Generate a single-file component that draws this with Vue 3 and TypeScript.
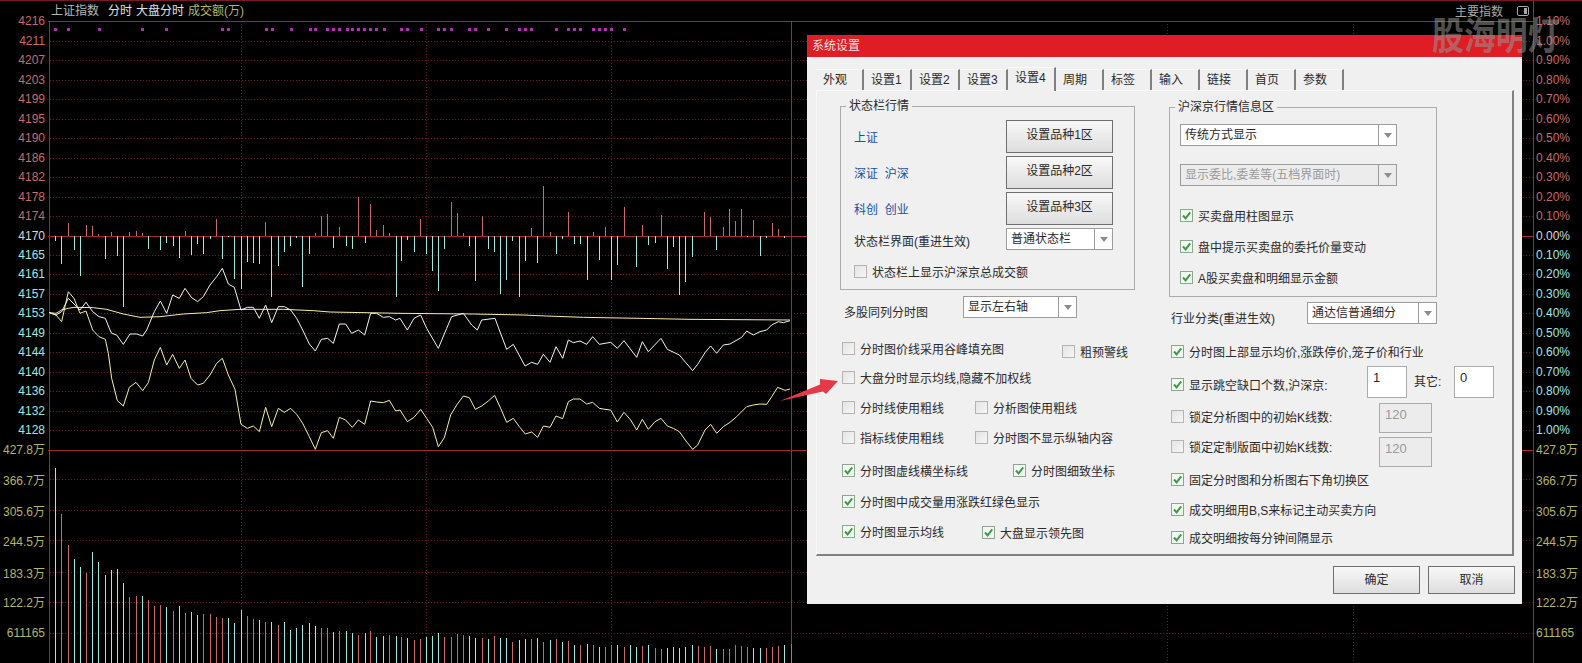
<script setup lang="ts">
type Pair = number[]

const RED = '#c96a6a'
const CYAN = '#9fe8e2'
const OLIVE = '#b4b46c'
const TICK = 'M2 5.5 4.6 8.4 9.2 2.4'

// everything traced from a 3x crop, hence the /3
const trace = (dx: number, dy: number, p: Pair): string[] => {
  const out: string[] = []
  for (let i = 0; i < p.length; i += 2) out.push(`${(p[i] + dx) / 3},${(p[i + 1] + dy) / 3}`)
  return out
}

const priceLine = [
  ...trace(0, 0, [148, 938, 168, 945, 185, 965, 205, 875, 222, 895, 240, 940, 258, 933, 278, 990]),
  ...trace(0, 990, [297, 20, 316, 28, 325, 70, 335, 145, 352, 212, 370, 228, 388, 172, 408, 157, 428, 182, 445, 158, 463, 90, 481, 52, 500, 105, 518, 73, 538, 115, 555, 90, 573, 145, 593, 165, 610, 160, 630, 135, 650, 100, 667, 85, 685, 135, 705, 178, 723, 283, 742, 295, 760, 288, 778, 305, 797, 232, 815, 290, 835, 235, 853, 247, 872, 235, 890, 253, 908, 280, 928, 320, 946, 358, 964, 308, 983, 302, 1000, 325, 1018, 262, 1037, 270, 1057, 292, 1075, 270, 1094, 283, 1112, 213, 1130, 216, 1150, 218, 1168, 211, 1187, 243]),
  ...trace(1200, 990, [0, 240, 22, 275, 42, 262, 62, 238, 80, 265, 98, 292, 115, 350, 133, 323, 152, 255, 170, 225, 190, 198, 208, 203, 226, 238, 245, 228, 265, 213, 284, 196, 302, 235, 320, 277, 340, 265, 358, 290, 376, 312, 395, 306, 413, 322, 430, 288, 450, 292, 468, 258, 488, 266, 505, 215, 520, 207, 540, 207, 560, 222, 578, 217, 598, 235, 615, 238, 632, 240, 652, 276, 672, 247, 692, 270, 710, 300, 727, 268, 745, 298, 765, 275, 783, 265, 802, 288, 820, 295, 838, 305, 858, 333, 878, 358, 893, 345, 915, 300, 932, 283, 950, 310, 970, 290, 990, 277, 1010, 260, 1040, 230, 1060, 225, 1080, 222, 1100, 223, 1115, 200, 1133, 172, 1155, 181, 1170, 177])
].join(' ')

const indexLine = [
  ...trace(0, 0, [148, 938, 168, 945, 185, 935, 205, 895, 222, 912, 240, 930, 258, 907, 278, 935, 297, 950, 316, 955, 330, 990]),
  ...trace(0, 990, [335, 10, 350, 15, 370, 43, 390, 12, 410, 12, 428, 18, 440, 0]),
  ...trace(0, 0, [463, 935, 481, 903, 500, 940, 518, 885, 538, 895, 555, 865, 575, 893, 593, 905, 610, 890, 630, 855, 650, 830, 667, 805, 685, 852, 703, 862, 723, 930, 742, 922, 760, 922, 778, 955, 797, 915, 815, 968, 835, 920, 853, 920, 872, 930, 890, 955, 908, 990]),
  ...trace(0, 990, [928, 42, 946, 63, 964, 28, 983, 25, 1000, 40, 1018, -18, 1037, -18, 1055, 10, 1075, 0, 1094, 15, 1112, -50, 1130, -50, 1150, -38, 1168, -40, 1187, -30]),
  ...trace(1200, 0, [0, 955, 22, 990, 42, 955, 62, 945, 80, 985, 115, 1045, 140, 985, 155, 950, 190, 940, 215, 975, 232, 990, 245, 960, 285, 955, 298, 990]),
  ...trace(1200, 990, [320, 58, 340, 43, 375, 108, 395, 97, 413, 103, 430, 73, 450, 97, 468, 50, 488, 85, 505, 30, 520, 38, 540, 33, 560, 43, 578, 20, 598, 43, 632, 37, 652, 55, 672, 32, 710, 82, 727, 35, 745, 65, 783, 25, 802, 58, 838, 75, 878, 122, 893, 103, 915, 68, 932, 48, 950, 70, 970, 45, 990, 42, 1025, 22, 1040, 3, 1060, 15, 1080, 5, 1100, 0]),
  ...trace(1200, 0, [1115, 975, 1135, 965, 1150, 968, 1170, 962])
].join(' ')

const avgLine = [
  ...trace(0, 0, [148, 938, 168, 940, 185, 930, 205, 925, 222, 922, 280, 923, 320, 928, 370, 942, 420, 952, 480, 950, 550, 942, 620, 938, 660, 932, 720, 928, 850, 928, 940, 932, 990, 936, 1200, 940]),
  ...trace(1200, 0, [220, 942, 370, 945, 440, 948, 550, 952, 720, 955, 870, 958, 1170, 960])
].join(' ')

const flowBars = (dx: number, fill: string, p: Pair) => {
  const out = []
  for (let i = 0; i < p.length; i += 2) {
    const tip = p[i + 1] / 3
    out.push({ x: Math.round((p[i] + dx) / 3), y: Math.min(tip, 236), h: Math.abs(tip - 236), fill })
  }
  return out
}

const topBars = [
  ...flowBars(0, CYAN, [166, 722, 184, 792, 223, 750, 241, 828, 316, 776, 352, 768, 370, 920, 445, 747, 481, 750, 499, 728, 519, 738, 538, 774, 574, 765, 592, 733, 610, 762, 631, 717, 667, 776, 685, 712, 703, 837, 723, 866, 742, 786, 760, 790, 778, 792, 814, 890, 835, 798, 853, 756, 871, 738, 889, 714, 907, 860, 928, 762, 999, 744, 1039, 738, 1057, 747, 1094, 730, 1187, 890]),
  ...flowBars(0, RED, [205, 668, 259, 675, 277, 677, 295, 703, 334, 696, 388, 696, 409, 692, 427, 699, 556, 692, 649, 656, 796, 666, 946, 698, 964, 648, 982, 642, 1018, 680, 1075, 592, 1111, 612, 1129, 690, 1150, 675, 1168, 699]),
  ...flowBars(1200, CYAN, [4, 782, 22, 720, 43, 756, 79, 762, 97, 812, 115, 873, 133, 747, 208, 738, 226, 843, 265, 747, 283, 756, 301, 882, 319, 840, 337, 723, 358, 890, 376, 783, 412, 789, 469, 762, 487, 717, 523, 732, 541, 732, 562, 840, 598, 780, 634, 840, 652, 795, 709, 801, 745, 735, 766, 729, 802, 807, 820, 741, 838, 885, 856, 846, 877, 771, 949, 750, 1042, 711, 1081, 768, 1099, 714, 1153, 714]),
  ...flowBars(1200, RED, [61, 657, 154, 606, 172, 639, 190, 699, 247, 648, 394, 684, 430, 558, 451, 696, 505, 636, 580, 696, 616, 681, 673, 621, 727, 675, 784, 645, 913, 636, 931, 651, 970, 681, 988, 628, 1006, 663, 1024, 627, 1060, 660, 1117, 669, 1135, 687])
]

// r / c = colour of the volume bar, x then tip y, both from the 3x crops
const volBars = (dx: number, list: string) =>
  list.split(' ').map((s) => {
    const [x, y] = s.slice(1).split(':').map(Number)
    const tip = (y + 990) / 3
    return { x: Math.round((x + dx) / 3), y: tip, h: 663 - tip, fill: s[0] === 'r' ? RED : CYAN }
  })

const volumeBars = [
  ...volBars(0, 'c166:415 r184:552 r205:646 c223:688 c241:712 r259:730 c277:667 c295:696 c316:736 c334:721 c352:718 c370:760 r388:801 r409:798 c427:798 r445:811 r463:828 r481:825 c499:832 r519:843 c538:828 r556:849 c574:846 c592:855 r610:852 r631:852 r649:862 r667:864 c685:864 c703:879 c723:840 r742:858 r760:867 c778:870 r796:876 c814:876 r835:885 c853:876 c871:900 c889:894 c907:885 c928:879 c946:888 r964:894 r982:894 c999:906 r1018:903 c1039:903 c1057:909 r1075:915 c1094:909 r1111:903 c1129:921 c1150:918 r1168:915 c1187:918'),
  ...volBars(1200, 'r4:921 c22:924 r43:930 r61:927 c79:921 c97:918 c115:909 r133:921 r154:921 r172:912 r190:915 c208:918 c226:924 r247:924 c265:927 r283:918 c301:924 c319:924 r337:936 c358:930 c376:927 r394:927 c412:924 r430:936 c451:930 r469:927 c487:936 r505:933 c523:945 r541:945 c562:942 r580:945 c598:951 r616:951 r634:945 c652:945 r673:951 c691:945 c709:951 r727:948 c745:945 r766:954 r784:957 c802:954 c820:951 c838:954 c856:951 c877:945 r895:948 r913:951 r931:948 c949:957 r970:957 r988:957 r1006:945 r1024:948 r1042:951 c1060:954 c1081:954 r1099:954 r1117:951 r1135:948 c1153:945 r1172:942')
]

const dots = [
  ...[169, 208, 299, 430, 502, 670, 688, 800, 818, 876, 932, 949, 985, 1002, 1020, 1043, 1060, 1078, 1096, 1113, 1132, 1155],
  ...[7, 25, 65, 118, 136, 157, 211, 229, 268, 322, 361, 379, 397, 472, 508, 526, 544, 583, 601, 619, 637, 676].map((x) => x + 1200)
].map((x) => Math.round(x / 3) - 2)

// y of the grid line, left label, right label, and how far the label sits under its line
const rows = ([
  [21, '4216', '1.10%', 0], [41, '4211', '1.00%', 0], [60, '4207', '0.90%', 0], [80, '4203', '0.80%', 0], [99, '4199', '0.70%', 0],
  [119, '4195', '0.60%', 0], [138, '4190', '0.50%', 0], [158, '4186', '0.40%', 0], [177, '4182', '0.30%', 0], [197, '4178', '0.20%', 0],
  [216, '4174', '0.10%', 0], [236, '4170', '0.00%', 0], [255, '4165', '0.10%', 0], [274, '4161', '0.20%', 0], [294, '4157', '0.30%', 0],
  [313, '4153', '0.40%', 0], [333, '4149', '0.50%', 0], [352, '4144', '0.60%', 0], [372, '4140', '0.70%', 0], [391, '4136', '0.80%', 0],
  [411, '4132', '0.90%', 0], [430, '4128', '1.00%', 0], [450, '427.8万', '427.8万', 0], [479, '366.7万', '366.7万', 2],
  [510, '305.6万', '305.6万', 2], [540, '244.5万', '244.5万', 2], [572, '183.3万', '183.3万', 2], [602, '122.2万', '122.2万', 1],
  [633, '611165', '611165', 0]
] as [number, string, string, number][]).map(([y, left, right, off]) => ({
  y,
  left,
  right,
  textY: y + off + 4,
  color: y < 236 ? RED : y === 236 ? '#d8d8d8' : y < 440 ? CYAN : OLIVE
}))

const solid = [21, 236, 450]
const dashed = rows.map((r) => r.y).filter((y) => !solid.includes(y))
const vDashed = [241, 426, 611, 1167, 1353]

const tabs = ['外观', '设置1', '设置2', '设置3', '设置4', '周期', '标签', '输入', '链接', '首页', '参数']

const statusRows = [
  { label: '上证', btn: '设置品种1区' },
  { label: '深证\u00a0\u00a0沪深', btn: '设置品种2区' },
  { label: '科创\u00a0\u00a0创业', btn: '设置品种3区' }
]

const infoChecks = ['买卖盘用柱图显示', '盘中提示买卖盘的委托价量变动', 'A股买卖盘和明细显示金额']

interface Item { t: string; on: boolean; w?: number; dy?: number }

const leftChecks: { gap: number; items: Item[] }[] = [
  { gap: 24, items: [{ t: '分时图价线采用谷峰填充图', on: false, w: 220 }, { t: '粗预警线', on: false, dy: 3 }] },
  { gap: 16, items: [{ t: '大盘分时显示均线,隐藏不加权线', on: false }] },
  { gap: 17, items: [{ t: '分时线使用粗线', on: false, w: 133 }, { t: '分析图使用粗线', on: false }] },
  { gap: 17, items: [{ t: '指标线使用粗线', on: false, w: 133 }, { t: '分时图不显示纵轴内容', on: false }] },
  { gap: 20, items: [{ t: '分时图虚线横坐标线', on: true, w: 171 }, { t: '分时图细致坐标', on: true }] },
  { gap: 18, items: [{ t: '分时图中成交量用涨跌红绿色显示', on: true }] },
  { gap: 17, items: [{ t: '分时图显示均线', on: true, w: 140 }, { t: '大盘显示领先图', on: true, dy: 1 }] }
]
</script>

<template>
  <div class="screen">
    <svg class="chart" width="1582" height="663" viewBox="0 0 1582 663">
      <g shape-rendering="crispEdges">
        <rect x="0" y="0" width="1582" height="1" fill="#7a1a20" />
        <line v-for="y in dashed" :key="'h' + y" x1="50" x2="1533" :y1="y + 0.5" :y2="y + 0.5" class="dash" />
        <line v-for="x in vDashed" :key="'v' + x" :x1="x + 0.5" :x2="x + 0.5" y1="21" y2="663" class="dash" />
        <line v-for="y in solid" :key="'s' + y" x1="48" x2="1533" :y1="y + 0.5" :y2="y + 0.5" class="rule" />
        <line x1="49.5" x2="49.5" y1="21" y2="663" class="rule" />
        <line x1="791.5" x2="791.5" y1="21" y2="663" class="rule" />
        <line x1="1533.5" x2="1533.5" y1="0" y2="663" class="rule" />
        <rect v-for="x in dots" :key="'d' + x" :x="x" y="28" width="3" height="3" fill="#b52fb5" />
        <rect v-for="(b, i) in topBars" :key="'t' + i" :x="b.x" :y="b.y" width="1" :height="b.h" :fill="b.fill" />
        <rect v-for="(b, i) in volumeBars" :key="'b' + i" :x="b.x" :y="b.y" width="1" :height="b.h" :fill="b.fill" />
      </g>
      <polyline :points="avgLine" class="line" stroke="#f5f0a8" />
      <polyline :points="indexLine" class="line" stroke="#f4f4f4" />
      <polyline :points="priceLine" class="line" stroke="#f5f0a8" />
      <text x="51" y="15" fill="#b8b8b8">上证指数</text>
      <text x="108" y="15" fill="#e2e2e2">分时</text>
      <text x="136" y="15" fill="#e2e2e2">大盘分时</text>
      <text x="188" y="15" :fill="OLIVE">成交额(万)</text>
      <text x="1455" y="16" fill="#a8a8a8">主要指数</text>
      <g v-for="r in rows" :key="r.y">
        <text x="45" :y="r.textY" text-anchor="end" :fill="r.color">{{ r.left }}</text>
        <text x="1536" :y="r.textY" :fill="r.color">{{ r.right }}</text>
      </g>
      <rect x="1517.5" y="6.5" width="11" height="9" rx="1.5" fill="none" stroke="#a8a8a8" />
      <rect x="1524" y="8" width="3" height="6" fill="#a8a8a8" />
    </svg>

    <section class="dialog">
      <header class="title">系统设置</header>
      <nav class="tabs">
        <div v-for="t in tabs" :key="t" class="tab" :class="{ active: t === '设置4' }">{{ t }}</div>
      </nav>
      <div class="panel">
        <div class="col-left">
          <div class="group status">
            <span class="legend">状态栏行情</span>
            <div class="status-grid">
              <template v-for="r in statusRows" :key="r.btn">
                <span class="blue">{{ r.label }}</span>
                <div class="btn big">{{ r.btn }}</div>
              </template>
              <span class="status-label">状态栏界面(重进生效)</span>
              <div class="sel"><span>普通状态栏</span><i class="arrow" /></div>
            </div>
            <div class="chk status-chk">
              <span class="box" />
              <span class="txt">状态栏上显示沪深京总成交额</span>
            </div>
          </div>
          <div class="sel-row multi">
            <span class="sel-label">多股同列分时图</span>
            <div class="sel"><span>显示左右轴</span><i class="arrow" /></div>
          </div>
          <div v-for="(row, i) in leftChecks" :key="i" class="chk-row" :style="{ marginTop: row.gap + 'px' }">
            <div
              v-for="it in row.items"
              :key="it.t"
              class="chk"
              :style="{ width: it.w ? it.w + 'px' : undefined, marginTop: it.dy ? it.dy + 'px' : undefined }"
            >
              <span class="box" :class="{ on: it.on }">
                <svg v-if="it.on" width="11" height="11" viewBox="0 0 11 11"><path :d="TICK" class="tick" /></svg>
              </span>
              <span class="txt">{{ it.t }}</span>
            </div>
          </div>
        </div>

        <div class="col-right">
          <div class="group info">
            <span class="legend">沪深京行情信息区</span>
            <div class="sel wide"><span>传统方式显示</span><i class="arrow" /></div>
            <div class="sel wide off"><span>显示委比,委差等(五档界面时)</span><i class="arrow" /></div>
            <div v-for="c in infoChecks" :key="c" class="chk info-chk">
              <span class="box on">
                <svg width="11" height="11" viewBox="0 0 11 11"><path :d="TICK" class="tick" /></svg>
              </span>
              <span class="txt">{{ c }}</span>
            </div>
          </div>
          <div class="sel-row industry">
            <span class="sel-label">行业分类(重进生效)</span>
            <div class="sel"><span>通达信普通细分</span><i class="arrow" /></div>
          </div>

          <div class="chk-row r1">
            <div class="chk"><span class="box on"><svg width="11" height="11" viewBox="0 0 11 11"><path :d="TICK" class="tick" /></svg></span><span class="txt">分时图上部显示均价,涨跌停价,笼子价和行业</span></div>
          </div>
          <div class="chk-row r2">
            <div class="chk gap-label"><span class="box on"><svg width="11" height="11" viewBox="0 0 11 11"><path :d="TICK" class="tick" /></svg></span><span class="txt">显示跳空缺口个数,沪深京:</span></div>
            <div class="edit gap-edit">1</div>
            <span class="other">其它:</span>
            <div class="edit gap-edit">0</div>
          </div>
          <div class="chk-row r3">
            <div class="chk lock-label"><span class="box" /><span class="txt">锁定分析图中的初始K线数:</span></div>
            <div class="edit off lock-a">120</div>
          </div>
          <div class="chk-row r4">
            <div class="chk lock-label"><span class="box" /><span class="txt">锁定定制版面中初始K线数:</span></div>
            <div class="edit off lock-b">120</div>
          </div>
          <div class="chk-row r5">
            <div class="chk"><span class="box on"><svg width="11" height="11" viewBox="0 0 11 11"><path :d="TICK" class="tick" /></svg></span><span class="txt">固定分时图和分析图右下角切换区</span></div>
          </div>
          <div class="chk-row r6">
            <div class="chk"><span class="box on"><svg width="11" height="11" viewBox="0 0 11 11"><path :d="TICK" class="tick" /></svg></span><span class="txt">成交明细用B,S来标记主动买卖方向</span></div>
          </div>
          <div class="chk-row r7">
            <div class="chk"><span class="box on"><svg width="11" height="11" viewBox="0 0 11 11"><path :d="TICK" class="tick" /></svg></span><span class="txt">成交明细按每分钟间隔显示</span></div>
          </div>
        </div>
      </div>
      <footer class="foot">
        <div class="btn small">确定</div>
        <div class="btn small">取消</div>
      </footer>
    </section>

    <svg class="pointer" width="60" height="26" viewBox="780 378 60 26">
      <polygon points="780,401 820,384.5 820,379 838,381 826,394 823,391.5" fill="#e5394a" />
    </svg>
    <div class="stamp">股海明灯</div>
  </div>
</template>

<style>
html,
body {
  margin: 0;
  background: #000;
  overflow: hidden;
}
</style>

<style scoped>
.screen {
  position: relative;
  width: 1582px;
  height: 663px;
  overflow: hidden;
  background: #000;
  font: 12px/16px "Liberation Sans", "Noto Sans CJK SC", sans-serif;
  color: #2a2a2a;
}

.chart {
  display: block;
}

.chart text {
  font: 12px "Liberation Sans", "Noto Sans CJK SC", sans-serif;
}

.dash {
  stroke: #6a1b1d;
  stroke-dasharray: 1 2;
}

.rule {
  stroke: #a02a30;
}

.line {
  fill: none;
  stroke-width: 1;
}

.dialog {
  position: absolute;
  left: 807px;
  top: 35px;
  width: 715px;
  height: 569px;
  background: #f0f0f0;
}

.title {
  height: 22px;
  line-height: 22px;
  padding-left: 5px;
  background: #e01d25;
  color: #f2e4e4;
}

.tabs {
  display: flex;
  height: 21px;
  margin: 12px 0 0 9px;
}

.tab {
  width: 48px;
  box-sizing: border-box;
  padding-left: 7px;
  line-height: 21px;
  border-right: 2px solid #808080;
  border-top: 1px solid #fafafa;
}

.tab.active {
  position: relative;
  z-index: 1;
  height: 24px;
  margin-top: -2px;
  background: #f0f0f0;
  line-height: 20px;
}

.panel {
  display: grid;
  grid-template-columns: 352px 1fr;
  box-sizing: border-box;
  width: 698px;
  height: 466px;
  margin-left: 9px;
  padding-top: 15px;
  border: 1px solid #fafafa;
  border-width: 1px 2px 2px 1px;
  border-right-color: #808080;
  border-bottom-color: #808080;
}

.col-left {
  padding-left: 23px;
}

.col-right {
  padding-top: 1px;
}

.group {
  position: relative;
  box-sizing: border-box;
  border: 1px solid #ababab;
}

.legend {
  position: absolute;
  top: -9px;
  left: 5px;
  padding: 0 3px;
  background: #f0f0f0;
}

.status {
  width: 295px;
  height: 184px;
  padding: 13px 0 0 13px;
}

.status-grid {
  display: grid;
  grid-template-columns: 152px 107px;
  grid-auto-rows: 33px;
  row-gap: 3px;
  align-items: center;
}

.status-grid .sel {
  align-self: start;
}

.blue {
  padding-top: 3px;
  color: #1c4fa3;
}

.status-label {
  margin-top: -5px;
}

.btn {
  box-sizing: border-box;
  border: 1px solid #6f6f6f;
  background: linear-gradient(#f8f8f8, #dedede);
  text-align: center;
}

.big {
  height: 33px;
  line-height: 29px;
}

.small {
  width: 87px;
  height: 28px;
  line-height: 26px;
}

.sel {
  display: flex;
  align-items: center;
  box-sizing: border-box;
  height: 22px;
  padding-left: 4px;
  border: 1px solid #9c9c9c;
  background: #fff;
}

.sel > span {
  flex: 1;
  white-space: nowrap;
}

.arrow {
  position: relative;
  width: 17px;
  height: 100%;
  border-left: 1px solid #9c9c9c;
}

.arrow::after {
  content: "";
  position: absolute;
  left: 5px;
  top: 8px;
  border: 4px solid transparent;
  border-top: 5px solid #8c8c8c;
  border-bottom: 0;
}

.wide {
  width: 217px;
}

.off {
  background: #ececec;
  color: #9a9a9a;
}

.chk {
  display: flex;
  flex: none;
  gap: 5px;
  height: 13px;
  white-space: nowrap;
}

.box {
  flex: none;
  box-sizing: border-box;
  width: 13px;
  height: 13px;
  border: 1px solid #b4b4b4;
  background: linear-gradient(135deg, #e4e4e4, #f6f6f6);
}

.box.on {
  border-color: #8aa98c;
  background: #f4f8f4;
}

.box svg {
  display: block;
}

.tick {
  fill: none;
  stroke: #3f9a45;
  stroke-width: 2;
}

.txt {
  line-height: 16px;
}

.status-chk {
  margin-top: 4px;
}

.sel-row {
  display: flex;
  height: 22px;
}

.sel-label {
  flex: none;
  padding-top: 9px;
}

.multi {
  margin: 6px 0 0 4px;
}

.multi .sel-label {
  width: 119px;
}

.multi .sel {
  width: 114px;
}

.chk-row {
  display: flex;
  align-items: flex-start;
  height: 13px;
  margin-left: 2px;
}

.r1 { margin-top: 21px; }
.r2 { margin-top: 20px; }
.r3 { margin-top: 19px; }
.r4 { margin-top: 17px; }
.r5 { margin-top: 20px; }
.r6 { margin-top: 17px; }
.r7 { margin-top: 15px; }

.info {
  width: 268px;
  height: 190px;
  padding: 16px 0 0 10px;
}

.info .off {
  margin-top: 18px;
}

.info-chk {
  margin-top: 18px;
}

.info .off + .info-chk {
  margin-top: 23px;
}

.industry {
  margin: 5px 0 0 2px;
}

.industry .sel-label {
  width: 136px;
}

.industry .sel {
  width: 130px;
}

.edit {
  flex: none;
  box-sizing: border-box;
  padding: 3px 0 0 5px;
  border: 1px solid #ababab;
  background: #fff;
  font-size: 13px;
}

.edit.off {
  background: #ececec;
}

.gap-label {
  width: 196px;
}

.gap-edit {
  width: 40px;
  height: 32px;
  margin-top: -12px;
}

.other {
  flex: none;
  width: 47px;
  padding-left: 7px;
  box-sizing: border-box;
  margin-top: -4px;
}

.lock-label {
  width: 208px;
}

.lock-a,
.lock-b {
  width: 53px;
  height: 30px;
}

.lock-a {
  margin-top: -7px;
}

.lock-b {
  margin-top: -3px;
}

.foot {
  display: flex;
  justify-content: flex-end;
  gap: 8px;
  padding: 10px 7px 0 0;
}

.pointer {
  position: absolute;
  left: 780px;
  top: 378px;
}

.stamp {
  position: absolute;
  left: 1432px;
  top: 12px;
  color: rgba(150, 150, 150, 0.55);
  font-size: 38px;
  font-weight: 700;
  line-height: 48px;
  white-space: nowrap;
  transform: scaleX(0.84);
  transform-origin: left center;
}
</style>
